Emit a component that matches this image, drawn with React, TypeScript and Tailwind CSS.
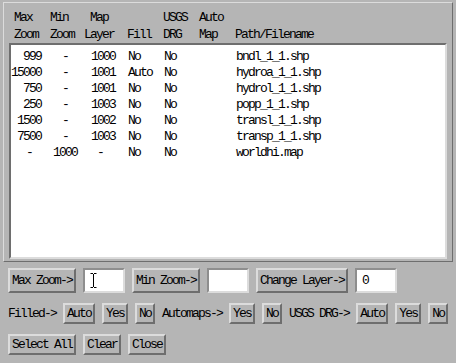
import React from "react";

const rows: string[][] = [
  ["999", "-", "1000", "No", "No", "", "bndl_1_1.shp"],
  ["15000", "-", "1001", "Auto", "No", "", "hydroa_1_1.shp"],
  ["750", "-", "1001", "No", "No", "", "hydrol_1_1.shp"],
  ["250", "-", "1003", "No", "No", "", "popp_1_1.shp"],
  ["1500", "-", "1002", "No", "No", "", "transl_1_1.shp"],
  ["7500", "-", "1003", "No", "No", "", "transp_1_1.shp"],
  ["-", "1000", "-", "No", "No", "", "worldhi.map"],
];

const cols = "grid grid-cols-[36px_36px_40px_36px_36px_36px_1fr]";

const Btn = ({ children, tall }: { children: React.ReactNode; tall?: boolean }) => (
  <div
    className={`border-2 border-t-[#dcdcdc] border-l-[#dcdcdc] border-r-[#6e6e6e] border-b-[#6e6e6e] bg-[#b5b5b5] px-[2px] whitespace-pre ${
      tall ? "h-[25px] leading-[21px]" : "h-[21px] leading-[17px]"
    }`}
  >
    {children}
  </div>
);

const Field = ({ children }: { children?: React.ReactNode }) => (
  <div className="w-[42px] h-[25px] border-2 border-t-[#8e8e8e] border-l-[#8e8e8e] border-r-[#dcdcdc] border-b-[#dcdcdc] bg-white px-[5px] leading-[21px] flex items-center">
    {children}
  </div>
);

const IBeam = () => (
  <svg width="7" height="15" viewBox="0 0 7 15" className="block">
    <path d="M0.5 0.5h2.5M4 0.5h2.5M3.5 1v13M0.5 14.5h2.5M4 14.5h2.5" stroke="#000" strokeWidth="1" fill="none" />
  </svg>
);

export default function App() {
  return (
    <div
      className="w-[456px] h-[363px] bg-[#b5b5b5] text-black text-[13px] tracking-[-1.8px] overflow-hidden pt-[2px]"
      style={{ fontFamily: '"Liberation Mono", "DejaVu Sans Mono", monospace' }}
    >
      {/* table frame */}
      <div className="ml-[3px] w-[450px] border border-t-[#dcdcdc] border-l-[#dcdcdc] border-r-[#6e6e6e] border-b-[#6e6e6e] pt-[6px] pb-[2px]">
        <div className={`${cols} pl-[6px] leading-[17px]`}>
          <div className="pl-[4px]">Max</div>
          <div className="pl-[4px]">Min</div>
          <div className="text-center pr-[6px]">Map</div>
          <div />
          <div className="pl-[5px]">USGS</div>
          <div className="pl-[5px]">Auto</div>
          <div />
          <div className="pl-[4px]">Zoom</div>
          <div className="pl-[4px]">Zoom</div>
          <div className="text-center pr-[6px]">Layer</div>
          <div className="pl-[5px]">Fill</div>
          <div className="pl-[5px]">DRG</div>
          <div className="pl-[5px]">Map</div>
          <div className="pl-[5px]">Path/Filename</div>
        </div>
        <div className="mx-[5px] h-[216px] border-2 border-t-[#6e6e6e] border-l-[#6e6e6e] border-r-[#dcdcdc] border-b-[#dcdcdc] bg-white pt-[4px]">
          {rows.map((r, i) => (
            <div key={i} className={`${cols} h-[16px] leading-[16px]`}>
              <div className={r[0] === "-" ? "text-center" : "text-right pr-[6px]"}>{r[0]}</div>
              <div className="text-center">{r[1]}</div>
              <div className={r[2] === "-" ? "text-center pr-[6px]" : "text-right pr-[8px]"}>{r[2]}</div>
              <div className="pl-[5px]">{r[3]}</div>
              <div className="pl-[5px]">{r[4]}</div>
              <div className="pl-[5px]">{r[5]}</div>
              <div className="pl-[5px]">{r[6]}</div>
            </div>
          ))}
        </div>
      </div>

      {/* controls */}
      <div className="pl-[8px] pt-[6px] flex flex-col gap-[10px]">
        <div className="flex items-center gap-[7px]">
          <Btn tall>Max Zoom-&gt;</Btn>
          <Field>
            <IBeam />
          </Field>
          <Btn tall>Min Zoom-&gt;</Btn>
          <Field />
          <Btn tall>Change Layer-&gt;</Btn>
          <Field>0</Field>
        </div>
        <div className="flex items-center gap-[7px]">
          <span className="whitespace-pre">Filled-&gt;</span>
          <Btn>Auto</Btn>
          <Btn>Yes</Btn>
          <Btn>No</Btn>
          <span className="whitespace-pre">Automaps-&gt;</span>
          <Btn>Yes</Btn>
          <Btn>No</Btn>
          <span className="whitespace-pre">USGS DRG-&gt;</span>
          <Btn>Auto</Btn>
          <Btn>Yes</Btn>
          <Btn>No</Btn>
        </div>
        <div className="flex items-center gap-[7px]">
          <Btn>Select All</Btn>
          <Btn>Clear</Btn>
          <Btn>Close</Btn>
        </div>
      </div>
    </div>
  );
}
